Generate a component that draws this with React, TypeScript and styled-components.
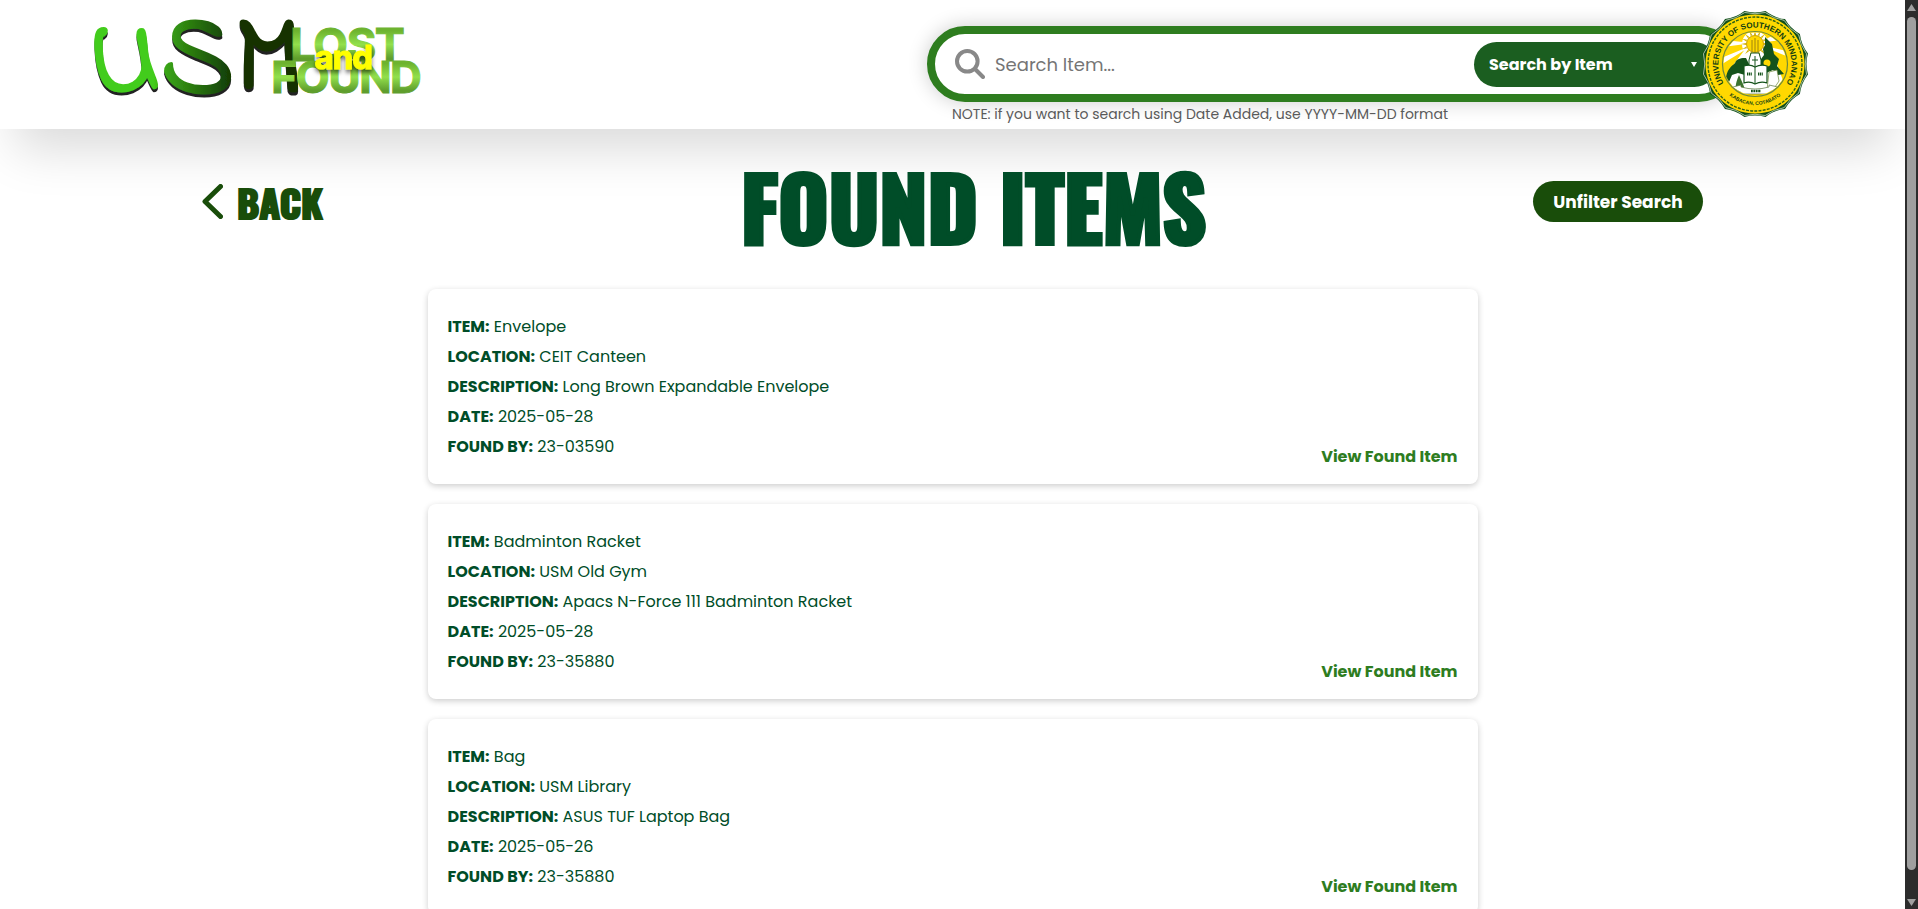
import React from "react";
import styled, { createGlobalStyle } from "styled-components";

const forest = "#004d28";
const leaf = "#2e7d1f";
const moss = "#194d0a";
const bodyFont = `Poppins, Inter, "Open Sans", sans-serif`;
const displayFont = `Impact, Oswald, "Liberation Sans", sans-serif`;

const GlobalStyle = createGlobalStyle`
  * { box-sizing: border-box; }
  body { margin: 0; background: #fff; font-family: ${bodyFont}; color: ${forest}; }
`;

const Shell = styled.div`
  display: flex;
  height: 100vh;
  overflow: hidden;
`;

const Page = styled.div`
  flex: 1;
  min-width: 0;
  overflow: hidden;
`;

const Header = styled.header`
  display: flex;
  justify-content: space-between;
  align-items: flex-start;
  height: 129px;
  padding: 10px 96px 0 90px;
  background: #fff;
  box-shadow: 0 35px 50px -15px rgba(0, 0, 0, 0.15);
`;

const HomeLink = styled.a`
  display: block;
  line-height: 0;
`;

const LogoArt = styled.svg`
  overflow: visible;
`;

const Tools = styled.div`
  display: flex;
  align-items: flex-start;
  flex: 0 1 882px;
`;

const SearchForm = styled.form`
  flex: 1;
  padding-top: 16px;
`;

const SearchBar = styled.div`
  display: flex;
  align-items: center;
  height: 76px;
  padding: 0 12px 0 20px;
  border: 8px solid ${leaf};
  border-radius: 38px;
  background: #fff;
  box-shadow: 0 0 20px rgba(0, 0, 0, 0.2);
`;

const SearchInput = styled.input`
  flex: 1;
  min-width: 0;
  height: 44px;
  margin-left: 8px;
  padding: 0 2px;
  border: 0;
  outline: 0;
  background: transparent;
  font: 400 18px ${bodyFont};
  color: #333;
  &::placeholder { color: #757575; opacity: 1; }
`;

const SelectWrap = styled.div`
  display: grid;
  align-items: center;
  width: 243px;
  height: 45px;
  border-radius: 23px;
  background: #1b5e20;
  > * { grid-area: 1 / 1; }
`;

const SearchSelect = styled.select`
  width: 100%;
  height: 100%;
  padding: 0 40px 0 15px;
  border: 0;
  appearance: none;
  background: transparent;
  color: #fff;
  font: 700 16px ${bodyFont};
`;

const Caret = styled.svg`
  justify-self: end;
  margin-right: 20px;
  pointer-events: none;
`;

const Note = styled.p`
  margin: 2px 0 0 25px;
  font-size: 14px;
  line-height: 20px;
  color: #5a5a5a;
`;

const SealLink = styled.a`
  margin-left: -36px;
  line-height: 0;
  position: relative;
`;

const TitleRow = styled.div`
  display: flex;
  align-items: center;
  justify-content: space-between;
  height: 128px;
  padding: 17px 202px 0;
`;

const BackLink = styled.a`
  display: flex;
  align-items: center;
  gap: 14px;
  width: 212px;
  color: ${moss};
  font: 700 38px/44px ${displayFont};
  -webkit-text-stroke: 2px ${moss};
  text-decoration: none;
`;

const Title = styled.h1`
  margin: 0;
  padding-top: 6px;
  font: 700 86px/88px ${displayFont};
  -webkit-text-stroke: 4px ${forest};
  white-space: nowrap;
`;

const ClearButton = styled.button`
  width: 170px;
  height: 41px;
  border: 0;
  border-radius: 21px;
  background: ${moss};
  color: #fff;
  font: 700 17px ${bodyFont};
  white-space: nowrap;
`;

const ItemList = styled.main`
  display: flex;
  flex-direction: column;
  gap: 20px;
  width: 1050px;
  max-width: 90%;
  margin: 32px auto 0;
`;

const Card = styled.article`
  display: flex;
  justify-content: space-between;
  padding: 23px 20px 22px;
  border-radius: 8px;
  background: #fff;
  box-shadow: 0 2px 6px rgba(0, 0, 0, 0.2);
`;

const Details = styled.div`
  font-size: 16px;
  line-height: 30px;
`;

const Field = styled.p`
  margin: 0;
`;

const ViewLink = styled.a`
  align-self: flex-end;
  color: ${leaf};
  font-size: 16px;
  font-weight: 700;
  line-height: 30px;
  margin-bottom: -10px;
  text-decoration: none;
`;

const Scrollbar = styled.div`
  display: flex;
  flex-direction: column;
  align-items: center;
  justify-content: space-between;
  width: 13px;
  padding: 4px 0 3px;
  background: #2c2c2c;
`;

const Thumb = styled.div`
  flex: 1;
  width: 9px;
  margin: 6px 0 29px;
  border-radius: 5px;
  background: #9f9f9f;
`;

const items = [
  { item: "Envelope", location: "CEIT Canteen", description: "Long Brown Expandable Envelope", date: "2025-05-28", by: "23-03590" },
  { item: "Badminton Racket", location: "USM Old Gym", description: "Apacs N-Force 111 Badminton Racket", date: "2025-05-28", by: "23-35880" },
  { item: "Bag", location: "USM Library", description: "ASUS TUF Laptop Bag", date: "2025-05-26", by: "23-35880" },
];

function Logo() {
  const block = { fontFamily: "Inter Tight, Inter, Liberation Sans", fontWeight: 700 };
  return (
    <LogoArt width="336" height="96" viewBox="90 10 336 96" role="img" aria-label="USM Lost and Found">
      <defs>
        <linearGradient id="lg-s" gradientUnits="userSpaceOnUse" x1="94" y1="0" x2="292" y2="0">
          <stop offset="0" stopColor="#43cc1a" />
          <stop offset="0.3" stopColor="#43cc1a" />
          <stop offset="0.36" stopColor="#3aa516" />
          <stop offset="0.68" stopColor="#154006" />
          <stop offset="0.72" stopColor="#183303" />
        </linearGradient>
        <linearGradient id="lg-b" x1="0" y1="0" x2="0" y2="1">
          <stop offset="0.25" stopColor="#6db32f" />
          <stop offset="0.5" stopColor="#92e04c" />
          <stop offset="0.75" stopColor="#5f9e2d" />
        </linearGradient>
        <filter id="lg-drop" x="-10%" y="-10%" width="120%" height="130%">
          <feDropShadow dx="0" dy="3" stdDeviation="0.4" floodColor="#222" />
        </filter>
        <filter id="lg-soft" x="-20%" y="-20%" width="140%" height="160%">
          <feDropShadow dx="0" dy="3" stdDeviation="2" floodColor="#000" floodOpacity="0.6" />
        </filter>
      </defs>
      <text x="89" y="91" fontSize="114" fill="url(#lg-s)" stroke="url(#lg-s)" strokeWidth="3" strokeLinejoin="round" fontFamily="Indie Flower, Lato" filter="url(#lg-drop)">USM</text>
      <text x="291" y="61" fontSize="45" fill="url(#lg-b)" stroke="url(#lg-b)" {...block}>LOST</text>
      <text x="272" y="93" fontSize="44" fill="url(#lg-b)" stroke="url(#lg-b)" {...block}>FOUND</text>
      <text x="315" y="69" fontSize="33" fill="#ffff00" stroke="#ffff00" filter="url(#lg-soft)" {...block}>and</text>
    </LogoArt>
  );
}

function scallop(cx: number, cy: number, r: number, dip: number, n: number) {
  let d = "";
  for (let i = 0; i < n; i++) {
    const a = ((i + 0.5) / n) * Math.PI * 2;
    const b = ((i + 1) / n) * Math.PI * 2;
    const c = ((i + 1.5) / n) * Math.PI * 2;
    const p = (t: number, q: number) => `${(cx + Math.cos(t) * q).toFixed(2)} ${(cy + Math.sin(t) * q).toFixed(2)}`;
    d += (i ? "" : `M${p(a, r)}`) + `Q${p(b, dip)} ${p(c, r)}`;
  }
  return d + "Z";
}

function Seal() {
  const rays = Array.from({ length: 16 }, (_, i) => i * 22.5);
  return (
    <svg width="108" height="110" viewBox="0 0 108 110" role="img" aria-label="University of Southern Mindanao">
      <defs>
        <path id="seal-top" d="M22 72A36.600 36.600 0 1 1 86 72" />
        <path id="seal-bottom" d="M26 83.500A40 40 0 0 0 82 83.500" />
        <clipPath id="seal-clip"><circle cx="54" cy="54" r="31.500" /></clipPath>
      </defs>
      <path d={scallop(54, 54, 54, 50, 16)} fill="#12501a" />
      <path d={scallop(54, 54, 52.5, 49, 16)} fill="none" stroke="#e9efdf" strokeWidth="0.7" />
      <circle cx="54" cy="54" r="49.500" fill="#ffd800" />
      <circle cx="54" cy="54" r="47" fill="none" stroke="#2d6215" strokeWidth="1.400" strokeDasharray="3 1.200" />
      <circle cx="54" cy="54" r="32.500" fill="#ffd800" stroke="#6f8a3c" strokeWidth="1.200" />
      <g clipPath="url(#seal-clip)">
        <g fill="#fff">
          <path d="M52 33 22 30v7zM52 35 18 49v7zM56 33l26-12 6 8zM56 34l34 8v6zM50 28 38 18l6-4zM58 26l4-12 6 3z" />
          <path d="M33 54l15-20h12l16 20 9 25H24z" />
          <circle cx="54" cy="34" r="13" />
        </g>
        {rays.map((a) => (
          <path key={a} d="M53 25h2l-1-5z" fill="#d4b300" transform={`rotate(${a} 54 34)`} />
        ))}
        <circle cx="54" cy="34" r="8.500" fill="#ffd800" stroke="#c99f00" />
        <path d="M51 30v12M54 28v14M57 30v12" stroke="#937c10" strokeWidth="0.9" />
        <path d="M25 67c2-9 5-10 9-14 2-5 7-5 11-5l4 8 2 10-7-1-7-2-6 2-3 7-4 1z" fill="#14521b" />
        <path d="M64 27l7 7 2 10 5 5-2 7 7 8-6 1-5-5-7 3-9-7-1-6 5-1 3-4-1-6 2-4z" fill="#14521b" />
        <circle cx="66" cy="53" r="3.500" fill="#ffd800" />
        <path d="M38 65c-2 5-5 12-2 17h9l-3-8z" fill="#3c7430" />
        <path d="M50 43h8l2 7v12H48V50z" fill="#fff" stroke="#14521b" />
        <path d="M54 46v12M51 50h6" stroke="#14521b" />
        <path d="M43 56q6-2 11 1 6-3 12-1v17q-6-2-12 1-5-3-11-1z" fill="#fff" stroke="#14521b" strokeWidth="1.200" />
        <path d="M54 57v17" stroke="#14521b" />
        <path d="M46 64h5M57 64h5" stroke="#14521b" strokeWidth="3" strokeDasharray="1.200 .6" />
        <path d="M68 62l8-2 2 11-6 9h-6z" fill="#fff" stroke="#6f8a3c" strokeWidth="0.7" />
        <path d="M32 77l8-2v2q14 4 28 0v-2l9 2-3 7H36z" fill="#fff" stroke="#56743e" strokeWidth="0.7" />
        <path d="M50 81h10" stroke="#14521b" strokeWidth="2.400" strokeDasharray="1.800 .6" />
      </g>
      <text fill="#123f12" fontFamily="Liberation Sans" fontWeight="700" fontSize="8">
        <textPath href="#seal-top" startOffset="50%" textAnchor="middle">UNIVERSITY OF SOUTHERN MINDANAO</textPath>
      </text>
      <text fill="#123f12" fontFamily="Liberation Sans" fontWeight="700" fontSize="5">
        <textPath href="#seal-bottom" startOffset="50%" textAnchor="middle">KABACAN, COTABATO</textPath>
      </text>
    </svg>
  );
}

export default function App() {
  return (
    <Shell>
      <GlobalStyle />
      <Page>
        <Header>
          <HomeLink href="#"><Logo /></HomeLink>
          <Tools>
            <SearchForm onSubmit={(e) => e.preventDefault()}>
              <SearchBar>
                <svg width="30" height="30" viewBox="0 0 30 30" fill="none" stroke="#888" strokeWidth="4" strokeLinecap="round" aria-hidden="true">
                  <circle cx="12.300" cy="12.300" r="10.300" />
                  <path d="M20 20l8 8" />
                </svg>
                <SearchInput type="text" placeholder="Search Item..." aria-label="Search Item" />
                <SelectWrap>
                  <SearchSelect aria-label="Search by" defaultValue="item">
                    <option value="item">Search by Item</option>
                    <option value="location">Search by Location</option>
                    <option value="date">Search by Date Added</option>
                  </SearchSelect>
                  <Caret width="6" height="5" viewBox="0 0 6 5" aria-hidden="true">
                    <path d="M0 0h6L3 5z" fill="#fff" />
                  </Caret>
                </SelectWrap>
              </SearchBar>
              <Note>NOTE: if you want to search using Date Added, use YYYY-MM-DD format</Note>
            </SearchForm>
            <SealLink href="#"><Seal /></SealLink>
          </Tools>
        </Header>
        <TitleRow>
          <BackLink href="#">
            <svg width="21" height="35" viewBox="0 0 21 35" fill="none" stroke={moss} strokeWidth="5" strokeLinecap="round" strokeLinejoin="round" aria-hidden="true">
              <path d="M18.500 2.500L3 17.500l15.500 15" />
            </svg>
            BACK
          </BackLink>
          <Title>FOUND ITEMS</Title>
          <ClearButton type="button">Unfilter Search</ClearButton>
        </TitleRow>
        <ItemList>
          {items.map((it) => (
            <Card key={it.item}>
              <Details>
                <Field><strong>ITEM:</strong> {it.item}</Field>
                <Field><strong>LOCATION:</strong> {it.location}</Field>
                <Field><strong>DESCRIPTION:</strong> {it.description}</Field>
                <Field><strong>DATE:</strong> {it.date}</Field>
                <Field><strong>FOUND BY:</strong> {it.by}</Field>
              </Details>
              <ViewLink href="#">View Found Item</ViewLink>
            </Card>
          ))}
        </ItemList>
      </Page>
      <Scrollbar aria-hidden="true">
        <svg width="9" height="7" viewBox="0 0 9 7"><path d="M4.500 0L9 7H0z" fill="#9f9f9f" /></svg>
        <Thumb />
        <svg width="9" height="7" viewBox="0 0 9 7"><path d="M4.500 7L0 0h9z" fill="#9f9f9f" /></svg>
      </Scrollbar>
    </Shell>
  );
}
